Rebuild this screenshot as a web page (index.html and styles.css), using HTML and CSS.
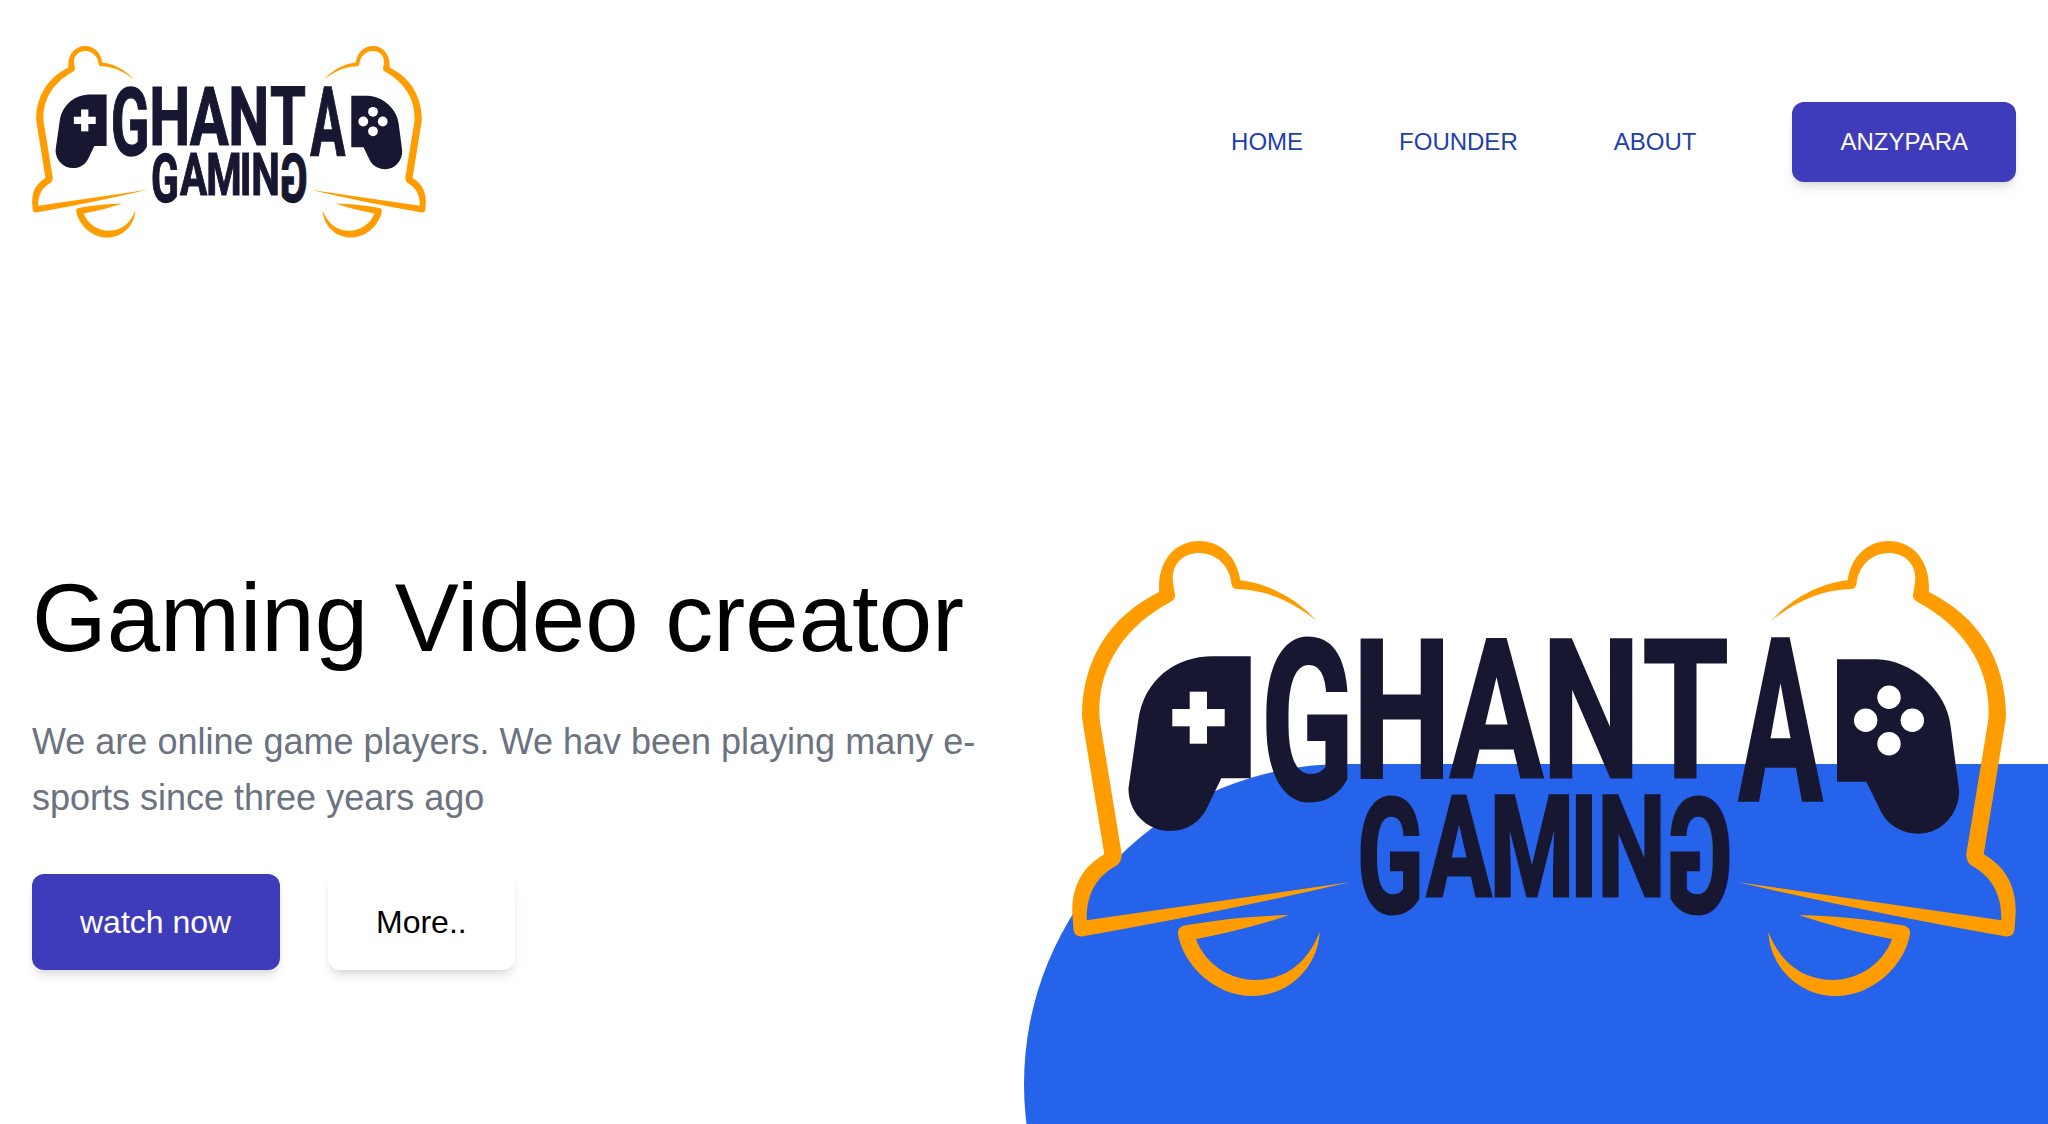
FILE: index.html
```html
<!DOCTYPE html>
<html lang="en">
<head>
<meta charset="utf-8">
<title>Ghanta Gaming</title>
<link rel="stylesheet" href="styles.css">
</head>
<body>
<svg class="defs" width="0" height="0" aria-hidden="true">
  <defs>
    <g id="bell">
      <path d="M1316.7 620.7C1297 599 1268 583 1240.3 580.3C1237 557 1221 541 1199 541C1177 541 1157 559 1159.2 592C1110 616 1082 660 1082 716Q1082.500 722 1083.500 727L1104.300 854.300C1084 866 1072 884 1072.300 912L1073.500 930Q1075 937 1082 936.500Q1222 912 1349.300 882.300L1086.700 920.300C1086 893 1098 875 1117 865.500Q1122 861 1121.700 854L1099.700 720C1096 668 1124 627 1170 602.300Q1175.500 599 1175 595Q1173 585 1172.700 578C1173 563 1184 553 1199 553C1218 553 1230 568 1231.300 583Q1232 589 1237 589C1266 590 1290 600 1316.700 620.700Z"/>
      <path d="M1289.300 915C1250 916 1215 920 1183.300 925.700Q1177 928 1178 934C1183 965 1215 996 1252 996C1289 996 1318 967 1319.700 931.700C1308 962 1286 980 1255 980C1230 980 1205 964 1196 939Q1245 930 1289.300 915Z"/>
    </g>
    <g id="emblem">
      <g fill="#ff9d00">
        <use href="#bell"/>
        <use href="#bell" transform="translate(3088 0) scale(-1 1)"/>
      </g>
      <g fill="#171732">
        <path d="M1250.700 656.300H1213C1175 656.300 1144 680 1138.300 720L1128.500 788C1128 812 1147 831 1170 831C1187 831 1200 822 1207 808L1221.300 778.300H1250.700Z"/>
        <path d="M1837 659.300H1876.700C1911 660 1947 690 1950.700 726.700L1959 790C1960 813 1942 833.700 1918.300 833.700C1902 833.700 1888 825 1881.700 813L1866.300 781.700H1837Z"/>
      </g>
      <g fill="#fff">
        <rect x="1189.700" y="691.700" width="17.300" height="52"/>
        <rect x="1172.300" y="709" width="52.400" height="17.300"/>
        <circle cx="1889" cy="697.300" r="11.700"/>
        <circle cx="1865.700" cy="720.300" r="11.700"/>
        <circle cx="1912.300" cy="720.300" r="11.700"/>
        <circle cx="1889" cy="743.700" r="11.700"/>
      </g>
    </g>
  </defs>
</svg>
<div class="page">
  <header class="header">
    <svg class="logo" viewBox="1072 541 944 456" preserveAspectRatio="none" role="img" aria-label="Ghanta Gaming">
      <use href="#emblem"/>
      <g class="wordmark">
        <text class="big" transform="translate(1307.300 799) scale(.98 1.600)">G</text>
        <text class="big" transform="translate(0 776.500) scale(1 1.395)" x="1401.800 1496.500 1591 1685.600">HANT</text>
        <text class="big" transform="translate(1780.500 800) scale(.9 1.635)">A</text>
        <text class="small" transform="translate(1390.400 912) scale(.98 1.600)">G</text>
        <text class="small" transform="translate(0 895.500) scale(.97 1.410)" x="1504.100 1579.400 1633 1682">AMIN</text>
        <text class="small" transform="translate(1699.500 912) scale(-.98 1.600)">G</text>
      </g>
    </svg>
    <nav class="nav">
      <a>HOME</a>
      <a>FOUNDER</a>
      <a>ABOUT</a>
      <a class="button nav-button">ANZYPARA</a>
    </nav>
  </header>
  <main class="hero">
    <section class="intro">
      <h1>Gaming Video creator</h1>
      <p>We are online game players. We hav been playing many e-sports since three years ago</p>
      <div class="actions">
        <a class="button primary">watch now</a>
        <a class="button plain">More..</a>
      </div>
    </section>
    <section class="art">
      <div class="blob"></div>
      <svg class="art-logo" viewBox="1072 541 944 456" role="img" aria-label="Ghanta Gaming">
        <use href="#emblem"/>
        <g class="wordmark">
          <text class="big" transform="translate(1307.300 799) scale(.98 1.600)">G</text>
          <text class="big" transform="translate(0 776.500) scale(1 1.395)" x="1401.800 1496.500 1591 1685.600">HANT</text>
          <text class="big" transform="translate(1780.500 800) scale(.9 1.635)">A</text>
          <text class="small" transform="translate(1390.400 912) scale(.98 1.600)">G</text>
          <text class="small" transform="translate(0 895.500) scale(.97 1.410)" x="1504.100 1579.400 1633 1682">AMIN</text>
          <text class="small" transform="translate(1699.500 912) scale(-.98 1.600)">G</text>
        </g>
      </svg>
    </section>
  </main>
</div>
</body>
</html>
```
FILE: styles.css
```css
* { box-sizing: border-box; }
body {
  margin: 0;
  background: #fff;
  color: #000;
  font-family: "Liberation Sans", Arial, sans-serif;
}
.defs { display: block; }
.page { height: 1124px; overflow: hidden; }
.header {
  height: 284px;
  padding: 0 32px;
  display: flex;
  align-items: center;
  justify-content: space-between;
}
.logo { width: 394px; height: 192px; display: block; }
.nav {
  display: flex;
  align-items: center;
  gap: 96px;
  font-size: 24px;
  color: #1e40af;
}
.button {
  display: flex;
  align-items: center;
  height: 96px;
  padding: 0 48px;
  border-radius: 12px;
  background: #3f3cbb;
  color: #fff;
  font-size: 32px;
  box-shadow: 0 8px 12px -2px rgba(0, 0, 0, .1), 0 4px 8px -4px rgba(0, 0, 0, .1);
}
.nav-button { height: 80px; font-size: 24px; }
.primary { min-width: 248px; }
.plain { background: #fff; color: #000; }
.hero {
  height: 840px;
  display: grid;
  grid-template-columns: 1fr 1fr;
}
.intro { padding: 286px 32px 0; }
h1 {
  margin: 0 0 48px;
  font-size: 96px;
  line-height: 96px;
  font-weight: 400;
  white-space: nowrap;
}
p {
  margin: 0 0 48px;
  color: #6b7280;
  font-size: 36px;
  line-height: 56px;
}
.actions { display: flex; gap: 48px; }
.art { position: relative; padding: 257px 32px 0 48px; }
.blob {
  position: absolute;
  left: 0;
  top: 480px;
  width: 100%;
  height: 640px;
  border-radius: 320px 0 0 320px;
  background: #2563eb;
}
.art-logo { position: relative; display: block; width: 944px; height: 456px; }
.wordmark {
  fill: #171732;
  stroke: #171732;
  stroke-width: 2px;
  font-family: Roboto, sans-serif;
  font-weight: 700;
  text-anchor: middle;
}
.big { font-size: 139px; }
.small { font-size: 100px; }
```
